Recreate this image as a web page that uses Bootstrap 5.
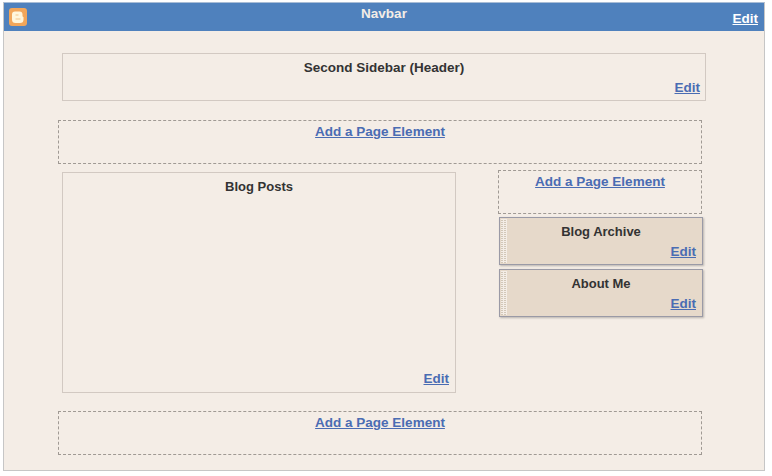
<!DOCTYPE html>
<html lang="en">

<head>
  <meta charset="UTF-8">
  <meta name="viewport" content="width=device-width, initial-scale=1">
  <title>Page Elements</title>
  <link href="https://cdn.jsdelivr.net/npm/bootstrap@5.3.0/dist/css/bootstrap.min.css" rel="stylesheet">
  <style>
    body {
      background: #fff;
      font-family: "Liberation Sans", Arial, sans-serif;
      font-size: 13.5px;
      font-weight: 700;
      line-height: 16px;
      color: #333;
    }

    a {
      color: #4a6cb3;
    }

    .frame {
      width: 762px;
      height: 469px;
      margin: 2px 0 0 3px;
      background: #f4ede6;
      border: 1px solid #c6c6c6;
      border-top-color: #a9bdd6;
    }

    .topbar {
      height: 28px;
      background: #4f81bd;
      color: #f4ede6;
    }

    .topbar a {
      color: #fff;
      right: 6px;
      top: 8px;
    }

    .blogger-logo {
      left: 5px;
      top: 5px;
      width: 18px;
      height: 18px;
    }

    .topbar-title {
      padding-top: 3px;
    }

    .page-area {
      padding: 22px 0 0 54px;
      width: 700px;
    }

    .solid-box {
      border: 1px solid #d2c9c2;
      text-align: center;
      margin-left: 4px;
    }

    .edit-link {
      right: 5px;
      bottom: 4px;
    }

    .header-box {
      width: 644px;
      height: 48px;
      padding-top: 6px;
    }

    .posts-box {
      width: 394px;
      height: 221px;
      padding-top: 6px;
      font-size: 13px;
    }

    .posts-box .edit-link {
      bottom: 5px;
      right: 6px;
      font-size: 13.5px;
    }

    .dash-box {
      border: 1px dashed #a09a94;
      text-align: center;
      height: 44px;
      padding-top: 3px;
    }

    .dash-wide {
      width: 644px;
    }

    .dash-top {
      margin: 19px 0 8px;
    }

    .dash-bottom {
      margin-top: 18px;
    }

    .dash-side {
      width: 204px;
      margin-left: 42px;
      margin-top: -2px;
    }

    .side-col {
      width: 204px;
    }

    .gadget {
      width: 204px;
      height: 48px;
      margin-left: 43px;
      margin-top: 4px;
      padding-top: 6px;
      text-align: center;
      font-size: 13px;
      background: #e6d9ca;
      border: 1px solid #9a9aa6;
      box-shadow: 1px 1px 2px rgba(0, 0, 0, .25);
    }

    .dash-side + .gadget {
      margin-top: 3px;
    }

    .gadget .edit-link {
      bottom: 4px;
      right: 6px;
      font-size: 13.5px;
    }

    .gadget-grip {
      left: 1px;
      top: 1px;
      bottom: 1px;
      width: 6px;
      background: repeating-linear-gradient(90deg, transparent 0 2px, #f4ede6 2px 3px),
        repeating-linear-gradient(#f4ede6 0 1px, #d2c7b8 1px 2px);
    }
  </style>
</head>

<body>
  <div class="frame">
    <div class="topbar position-relative text-center">
      <svg class="blogger-logo position-absolute" viewBox="0 0 18 18">
        <rect width="18" height="18" rx="3" fill="#f2a65a" />
        <path d="M6.5 3.5h4a3 3 0 0 1 3 3v1.500a1.200 1.200 0 0 0 1 1v2.500a3.500 3.500 0 0 1-3.500 3.500h-4.500a3.500 3.500 0 0 1-3.500-3.500v-5a3 3 0 0 1 3-3z" fill="#fff6dc" />
        <path d="M6.500 7h3M6.500 11h5" stroke="#f2c48a" stroke-width="1" fill="none" />
      </svg>
      <div class="topbar-title">Navbar</div>
      <a class="position-absolute" href="#">Edit</a>
    </div>

    <div class="page-area">
      <div class="solid-box header-box position-relative">
        Second Sidebar (Header)
        <a class="edit-link position-absolute" href="#">Edit</a>
      </div>

      <div class="dash-box dash-wide dash-top">
        <a href="#">Add a Page Element</a>
      </div>

      <div class="d-flex align-items-start">
        <div class="solid-box posts-box position-relative">
          Blog Posts
          <a class="edit-link position-absolute" href="#">Edit</a>
        </div>
        <div class="side-col">
          <div class="dash-box dash-side">
            <a href="#">Add a Page Element</a>
          </div>
          <div class="gadget position-relative">
            <span class="gadget-grip position-absolute"></span>
            Blog Archive
            <a class="edit-link position-absolute" href="#">Edit</a>
          </div>
          <div class="gadget position-relative">
            <span class="gadget-grip position-absolute"></span>
            About Me
            <a class="edit-link position-absolute" href="#">Edit</a>
          </div>
        </div>
      </div>

      <div class="dash-box dash-wide dash-bottom">
        <a href="#">Add a Page Element</a>
      </div>
    </div>
  </div>

  <script src="https://cdn.jsdelivr.net/npm/bootstrap@5.3.0/dist/js/bootstrap.bundle.min.js"></script>
</body>

</html>
